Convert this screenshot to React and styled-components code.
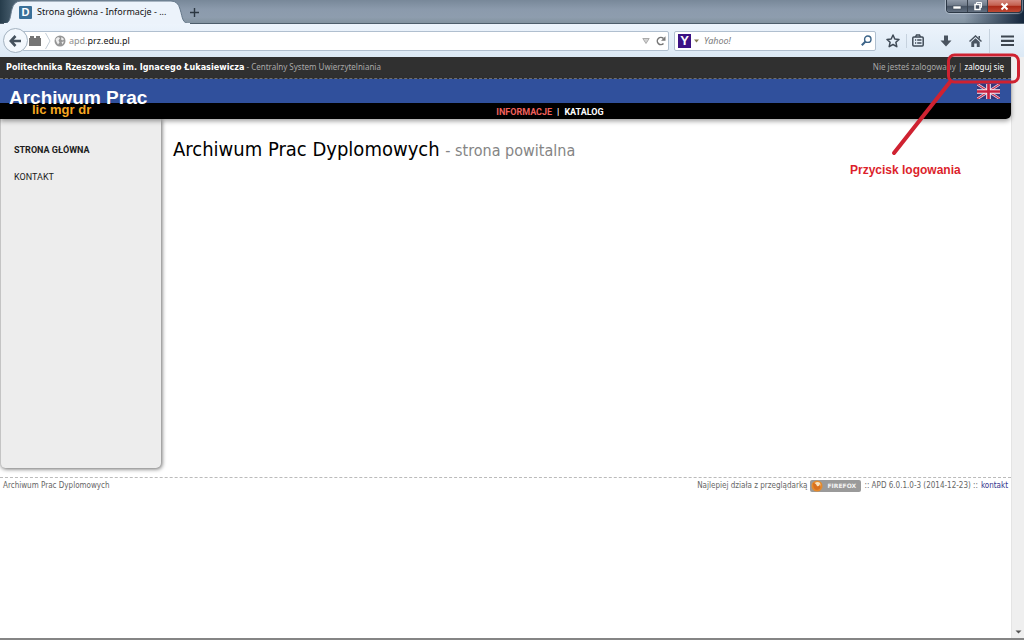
import React from "react";
import styled, { createGlobalStyle } from "styled-components";

const tahoma = `"DejaVu Sans Condensed", "DejaVu Sans", sans-serif`;
const arial = `"Liberation Sans", Arial, sans-serif`;
const segoe = `"Noto Sans", "Open Sans", sans-serif`;
const menuFont = `Roboto, "Liberation Sans", sans-serif`;

const GlobalStyle = createGlobalStyle`
  * { box-sizing: border-box; }
  body { margin: 0; background: #fff; font-family: ${tahoma}; }
  button, input { font: inherit; color: inherit; border: 0; padding: 0; margin: 0; background: none; }
  a { color: inherit; text-decoration: none; }
  svg { display: block; flex: none; }
`;

const Browser = styled.div`
  position: relative;
  display: flex;
  flex-direction: column;
  min-height: 100vh;
  border-bottom: 2px solid #858585;
`;

/* window frame and tabs */
const TabStrip = styled.div`
  display: flex;
  align-items: flex-end;
  height: 24px;
  padding-left: 4px;
  border-bottom: 1px solid #4d5d6b;
  background: linear-gradient(to right, #263c4b 0, #4a6070 14px, transparent 40px, transparent calc(100% - 60px), #14263c 100%),
    linear-gradient(#788899 0, #8b9aac 40%, #8e9dae 75%, #82929f 100%);
`;

const Tab = styled.div`
  position: relative;
  display: flex;
  align-items: center;
  gap: 5px;
  width: 182px;
  height: 24px;
  margin-bottom: -1px;
  padding-left: 15px;
  font: 9px/16px ${segoe};
  color: #111;
  white-space: nowrap;
`;

const TabShape = styled.svg`
  position: absolute;
  inset: 0;
  z-index: 0;
`;

const Favicon = styled.span`
  position: relative;
  width: 13px;
  height: 13px;
  border-radius: 1px;
  background: #3a7099;
  color: #fff;
  font: bold 11px/13px ${arial};
  text-align: center;
`;

const TabTitle = styled.span`
  position: relative;
`;

const NewTab = styled.button`
  display: flex;
  align-items: center;
  justify-content: center;
  width: 16px;
  height: 22px;
`;

const WindowControls = styled.div`
  display: flex;
  align-self: flex-start;
  height: 13px;
  margin-left: auto;
  margin-right: 2px;
  border: 1px solid #2c3846;
  border-top: 0;
  border-radius: 0 0 4px 4px;
  overflow: hidden;
  box-shadow: 0 0 1px 1px rgba(220, 230, 240, 0.5);
`;

const WindowButton = styled.button`
  display: flex;
  align-items: center;
  justify-content: center;
  width: ${(p) => (p.$close ? 34 : 20)}px;
  border-left: ${(p) => (p.$first ? "0" : "1px solid #39434f")};
  background: ${(p) =>
    p.$close
      ? "linear-gradient(#d58a80 0, #c4604f 45%, #a92715 50%, #bf4a35 100%)"
      : "linear-gradient(#909aa8 0, #707b8a 45%, #465262 50%, #626f80 100%)"};
`;

const Toolbar = styled.div`
  display: flex;
  align-items: center;
  height: 33px;
  padding-left: 3px;
  background: linear-gradient(#edf4fc, #dce9f5);
`;

const BackButton = styled.button`
  position: relative;
  z-index: 1;
  display: flex;
  align-items: center;
  justify-content: center;
  flex: none;
  width: 25px;
  height: 25px;
  border: 1px solid #a3b2c0;
  border-radius: 50%;
  background: #f3f8fd;
`;

const Field = styled.div`
  display: flex;
  align-items: center;
  flex: ${(p) => (p.$grow ? "1 1 0" : "0 1 202px")};
  min-width: 0;
  height: 20px;
  margin-left: ${(p) => (p.$grow ? -6 : 5)}px;
  border: 1px solid #b0bfcf;
  border-radius: 2px;
  background: #fff;
  font: ${(p) => (p.$grow ? "normal" : "italic")} 9px/18px ${segoe};
`;

const SiteIcons = styled.span`
  display: flex;
  align-items: center;
  gap: 3px;
  padding-left: 6px;
  margin-right: 3px;
`;

const Subdomain = styled.span`
  color: #8d8d8d;
`;

const TextInput = styled.input`
  flex: 1;
  min-width: 0;
  height: 18px;
  outline: 0;
  color: #151515;
  &::placeholder { color: #7a7a7a; opacity: 1; }
`;

const IconButton = styled.button`
  display: flex;
  align-items: center;
  justify-content: center;
  flex: none;
  width: ${(p) => p.$w || 14}px;
  height: 18px;
`;

const EngineButton = styled.button`
  display: flex;
  align-items: center;
  gap: 2px;
  margin: 0 4px 0 3px;
`;

const EngineLogo = styled.span`
  width: 13px;
  height: 14px;
  background: #3b1184;
  color: #fff;
  font: normal bold 13px/14px ${arial};
  text-align: center;
`;

const Tools = styled.div`
  display: flex;
  align-items: center;
  margin-left: 4px;
`;

const Separator = styled.span`
  width: 1px;
  height: ${(p) => p.$h}px;
  margin-left: ${(p) => p.$gap || 0}px;
  background: #c6d2de;
`;

/* page */
const Viewport = styled.div`
  display: flex;
  flex: 1;
`;

const Page = styled.div`
  flex: 1;
  min-width: 0;
`;

const Scrollbar = styled.div`
  display: flex;
  align-items: flex-end;
  justify-content: center;
  flex: none;
  width: 13px;
  padding-bottom: 4px;
  border-left: 1px solid #e4e4e4;
  background: #efefef;
`;

const LoginBar = styled.div`
  display: flex;
  justify-content: space-between;
  height: 22px;
  padding: 0 7px 0 6px;
  border-bottom: 1px dashed #777;
  background: #303030;
  color: #a9a9a9;
  font-family: ${segoe};
  font-size: 8px;
  line-height: 20px;
  white-space: nowrap;

  a { color: #fff; }
`;

const University = styled.strong`
  color: #fff;
  font-family: ${tahoma};
  font-size: 9px;
`;

const Banner = styled.header`
  border-radius: 0 0 5px 0;
  overflow: hidden;
  background: #000;
  font-family: ${arial};
  font-weight: bold;
`;

const BannerShadow = styled.div`
  position: relative;
  border-radius: 0 0 5px 0;
  box-shadow: 0 2px 5px rgba(0, 0, 0, 0.4);
`;

const BannerTop = styled.div`
  display: flex;
  justify-content: space-between;
  height: 24px;
  padding: 5px 11px 0 9px;
  background: #30509c;
`;

const SiteTitle = styled.div`
  position: relative;
  color: #fff;
  font-size: 19px;
  line-height: 28px;
  white-space: nowrap;
`;

const BannerBottom = styled.div`
  display: flex;
  height: 16px;
  line-height: 16px;
`;

const Degrees = styled.div`
  position: relative;
  flex: none;
  width: 89px;
  padding-left: 32px;
  color: #f6a821;
  font-size: 13px;
  line-height: 14px;
  white-space: nowrap;
`;

const MainNav = styled.nav`
  display: flex;
  justify-content: center;
  gap: 5px;
  flex: 1;
  color: #fff;
  font-family: ${menuFont};
  font-size: 9px;
  line-height: 18px;
`;

const NavLink = styled.a`
  color: ${(p) => (p.$active ? "#f0605c" : "#fff")};
`;

const Body = styled.div`
  display: flex;
  align-items: flex-start;
`;

const Sidebar = styled.nav`
  display: flex;
  flex-direction: column;
  gap: 13px;
  flex: none;
  width: 161px;
  min-height: 349px;
  padding: 24px 13px;
  border-left: 1px solid #c4c4c4;
  border-radius: 0 0 5px 5px;
  background: #ededed;
  box-shadow: 1px 1px 4px rgba(0, 0, 0, 0.6);
`;

const SideLink = styled.a`
  color: #1c1c1c;
  font-family: ${menuFont};
  font-size: 9px;
  line-height: 14px;
  font-weight: ${(p) => (p.$active ? "bold" : "normal")};
`;

const Content = styled.main`
  flex: 1;
  padding: 16px 12px;
`;

const Heading = styled.h1`
  margin: 0;
  color: #000;
  font-size: 20px;
  line-height: 28px;
  font-weight: normal;
`;

const HeadingNote = styled.span`
  color: #858585;
  font-size: 16px;
`;

const Footer = styled.footer`
  display: flex;
  justify-content: space-between;
  margin-top: 9px;
  padding: 0 3px;
  border-top: 1px dashed #bbb;
  color: #666;
  font-size: 8px;
  line-height: 16px;
`;

const FooterInfo = styled.div`
  display: flex;
  align-items: center;
  gap: 3px;
  a { color: #34348c; }
`;

const FirefoxBadge = styled.a`
  display: flex;
  align-items: center;
  gap: 4px;
  width: 51px;
  height: 12px;
  padding-left: 1px;
  border-radius: 2px;
  background: #9a9a9a;
  font: bold 6px/12px "DejaVu Sans", sans-serif;
  && { color: #f4f4f4; }
`;

/* annotation over the page */
const Callout = styled.div`
  position: absolute;
  top: 53px;
  right: 4px;
  width: 170px;
  pointer-events: none;
`;

const CalloutText = styled.div`
  color: #dc1f2c;
  font: bold 12px/18px ${arial};
  white-space: nowrap;
`;

function UnionJack() {
  return (
    <svg width="23" height="15" viewBox="0 0 60 40" preserveAspectRatio="none" role="img" aria-label="English">
      <rect width="60" height="40" fill="#34387c" />
      <path d="M0 0L60 40M60 0L0 40" stroke="#e8dcea" strokeWidth="7" />
      <path d="M0 0L60 40M60 0L0 40" stroke="#c9304d" strokeWidth="3" />
      <path d="M30 0V40M0 20H60" stroke="#f5eef4" strokeWidth="12" />
      <path d="M30 0V40M0 20H60" stroke="#c9203f" strokeWidth="7" />
    </svg>
  );
}

export default function App() {
  return (
    <Browser>
      <GlobalStyle />
      <TabStrip>
        <Tab>
          <TabShape width="186" height="24" viewBox="0 0 186 24" aria-hidden="true">
            <path d="M0 24C7 23 6 16 8 9Q10 1 17 1H167Q174 1 176 9C179 19 178 23 186 24Z" fill="#ecf3fb" stroke="#65788a" strokeWidth="1" />
            <path d="M0 24H186" stroke="#ecf3fb" strokeWidth="2" />
          </TabShape>
          <Favicon>D</Favicon>
          <TabTitle>Strona główna - Informacje - ...</TabTitle>
        </Tab>
        <NewTab aria-label="Nowa karta">
          <svg width="9" height="9" viewBox="0 0 9 9"><path d="M4.500 0V9M0 4.500H9" stroke="#2c3742" strokeWidth="1.400" /></svg>
        </NewTab>
        <WindowControls>
          <WindowButton $first aria-label="Minimalizuj">
            <svg width="10" height="8" viewBox="0 0 10 8"><rect x="1" y="4" width="8" height="3" fill="#fff" stroke="#3c4653" strokeWidth=".6" /></svg>
          </WindowButton>
          <WindowButton aria-label="Przywróć">
            <svg width="10" height="10" viewBox="0 0 10 10"><path d="M3.500 3V1.500H8.500V6.500H7" fill="none" stroke="#fff" /><rect x="2" y="3.500" width="5" height="5" fill="#4b5666" stroke="#fff" strokeWidth="1.500" /></svg>
          </WindowButton>
          <WindowButton $close aria-label="Zamknij">
            <svg width="9" height="9" viewBox="0 0 9 9"><path d="M1.500 1.500L7.500 7.500M7.500 1.500L1.500 7.500" stroke="#fff" strokeWidth="2" /></svg>
          </WindowButton>
        </WindowControls>
      </TabStrip>

      <Toolbar>
        <BackButton aria-label="Wstecz">
          <svg width="13" height="12" viewBox="0 0 13 12"><path d="M6.500 1L1.800 6L6.500 11M2 6H12" fill="none" stroke="#46525e" strokeWidth="2.600" /></svg>
        </BackButton>
        <Field $grow>
          <SiteIcons>
            <svg width="13" height="12" viewBox="0 0 13 12"><path d="M0 3H1V1H5V3H7V1H11V3H12V11H0Z" fill="#757575" /></svg>
            <svg width="6" height="18" viewBox="0 0 6 18"><path d="M.5 1L5 9L.5 17" fill="none" stroke="#c3cdd6" /></svg>
            <svg width="12" height="12" viewBox="0 0 12 12"><circle cx="6" cy="6" r="5.500" fill="#959595" /><path d="M1.500 4L4 2L6 3L4.500 5.500L5.500 7.500L4 9.500L2.500 7ZM7.500 2L10 4L9 5.500L7 4.500ZM7.500 7L10 6.500L8.500 9.500Z" fill="#eee" /></svg>
          </SiteIcons>
          <Subdomain>apd.</Subdomain>
          <TextInput aria-label="Adres strony" defaultValue="prz.edu.pl" />
          <IconButton aria-label="Historia">
            <svg width="8" height="6" viewBox="0 0 8 6"><path d="M.8 .5H7.200L4 5.500Z" fill="#d2d2d2" stroke="#aaa" /></svg>
          </IconButton>
          <IconButton $w={15} aria-label="Odśwież">
            <svg width="10" height="10" viewBox="0 0 10 10"><path d="M7.500 7.500A3.600 3.600 0 1 1 7.400 2.400" fill="none" stroke="#777" strokeWidth="1.500" /><path d="M9.500 .2V4.700H5Z" fill="#777" /></svg>
          </IconButton>
        </Field>
        <Field>
          <EngineButton aria-label="Wyszukiwarka">
            <EngineLogo>Y</EngineLogo>
            <svg width="7" height="4" viewBox="0 0 7 4"><path d="M1 .5H6L3.500 3.500Z" fill="#857a55" /></svg>
          </EngineButton>
          <TextInput aria-label="Szukaj" placeholder="Yahoo!" />
          <IconButton $w={18} aria-label="Wyszukaj">
            <svg width="11" height="11" viewBox="0 0 11 11"><circle cx="6.800" cy="4.200" r="3.200" fill="none" stroke="#3c6488" strokeWidth="1.400" /><path d="M4.500 6.500L.8 10.200" stroke="#3c6488" strokeWidth="2" /></svg>
          </IconButton>
        </Field>
        <Tools>
          <IconButton $w={26} aria-label="Dodaj zakładkę">
            <svg width="14" height="14" viewBox="0 0 14 14"><path d="M7 1L8.800 5L13 5.400L9.900 8.300L10.800 12.700L7 10.500L3.200 12.700L4.100 8.300L1 5.400L5.200 5Z" fill="none" stroke="#404b57" strokeWidth="1.500" strokeLinejoin="round" /></svg>
          </IconButton>
          <Separator $h={14} />
          <IconButton $w={22} aria-label="Zakładki">
            <svg width="12" height="13" viewBox="0 0 12 13"><rect x=".8" y="3" width="10.400" height="9" rx="1" fill="none" stroke="#404b57" strokeWidth="1.500" /><path d="M3.500 3L4.500 1H7.500L8.500 3" fill="none" stroke="#404b57" strokeWidth="1.500" /><path d="M3 6H4.200M5.200 6H9.500M3 9H4.200M5.200 9H9.500" stroke="#404b57" strokeWidth="1.300" /></svg>
          </IconButton>
          <IconButton $w={34} aria-label="Pobrane pliki">
            <svg width="12" height="12" viewBox="0 0 12 12"><path d="M4 .5H8V5.500H11.500L6 11.500L.5 5.500H4Z" fill="#4a5460" /></svg>
          </IconButton>
          <IconButton $w={24} aria-label="Strona startowa">
            <svg width="13" height="12" viewBox="0 0 13 12"><path d="M.5 6.500L6.500 1L12.500 6.500" fill="none" stroke="#4a5460" strokeWidth="1.500" /><path d="M2.300 7L6.500 3.200L10.700 7V12H7.800V8.500H5.200V12H2.300Z" fill="#4a5460" /><path d="M9.500 1H11V4L9.500 3Z" fill="#4a5460" /></svg>
          </IconButton>
          <Separator $h={24} $gap={2} />
          <IconButton $w={34} aria-label="Menu">
            <svg width="13" height="12" viewBox="0 0 13 12"><path d="M0 1.500H13M0 5.800H13M0 10H13" stroke="#3d4650" strokeWidth="2.200" /></svg>
          </IconButton>
        </Tools>
      </Toolbar>

      <Viewport>
        <Page>
          <LoginBar>
            <div>
              <University>Politechnika Rzeszowska im. Ignacego Łukasiewicza</University> - Centralny System Uwierzytelniania
            </div>
            <div>
              Nie jesteś zalogowany | <a href="#login">zaloguj się</a>
            </div>
          </LoginBar>
          <BannerShadow>
            <Banner>
              <BannerTop>
                <SiteTitle>Archiwum Prac</SiteTitle>
                <a href="#en"><UnionJack /></a>
              </BannerTop>
              <BannerBottom>
                <Degrees>lic mgr dr</Degrees>
                <MainNav>
                  <NavLink $active href="#informacje">INFORMACJE</NavLink>
                  <span>|</span>
                  <NavLink href="#katalog">KATALOG</NavLink>
                </MainNav>
              </BannerBottom>
            </Banner>
          </BannerShadow>
          <Body>
            <Sidebar>
              <SideLink $active href="#start">STRONA GŁÓWNA</SideLink>
              <SideLink href="#kontakt">KONTAKT</SideLink>
            </Sidebar>
            <Content>
              <Heading>
                Archiwum Prac Dyplomowych <HeadingNote>- strona powitalna</HeadingNote>
              </Heading>
            </Content>
          </Body>
          <Footer>
            <span>Archiwum Prac Dyplomowych</span>
            <FooterInfo>
              <span>Najlepiej działa z przeglądarką</span>
              <FirefoxBadge href="#firefox">
                <svg width="12" height="12" viewBox="0 0 12 12"><circle cx="6" cy="6" r="5.500" fill="#e58a2c" /><circle cx="6.500" cy="5" r="3" fill="#f8e2bd" /><path d="M2 3Q5 3 6 6Q8 7 9 4Q11 9 6 10Q2 10 2 3Z" fill="#d9701e" /></svg>
                FIREFOX
              </FirefoxBadge>
              <span>:: APD 6.0.1.0-3 (2014-12-23) ::</span>
              <a href="#kontakt">kontakt</a>
            </FooterInfo>
          </Footer>
        </Page>
        <Scrollbar>
          <svg width="7" height="4" viewBox="0 0 7 4"><path d="M.5 .5H6.500L3.500 3.500Z" fill="#555" /></svg>
        </Scrollbar>
      </Viewport>

      <Callout>
        <svg width="170" height="108" viewBox="0 0 170 108" aria-hidden="true">
          <rect x="98.500" y="2" width="70" height="27" rx="6" fill="none" stroke="#cf2231" strokeWidth="3" />
          <path d="M100 29L44 100" stroke="#cf2231" strokeWidth="4" strokeLinecap="round" />
        </svg>
        <CalloutText>Przycisk logowania</CalloutText>
      </Callout>
    </Browser>
  );
}
